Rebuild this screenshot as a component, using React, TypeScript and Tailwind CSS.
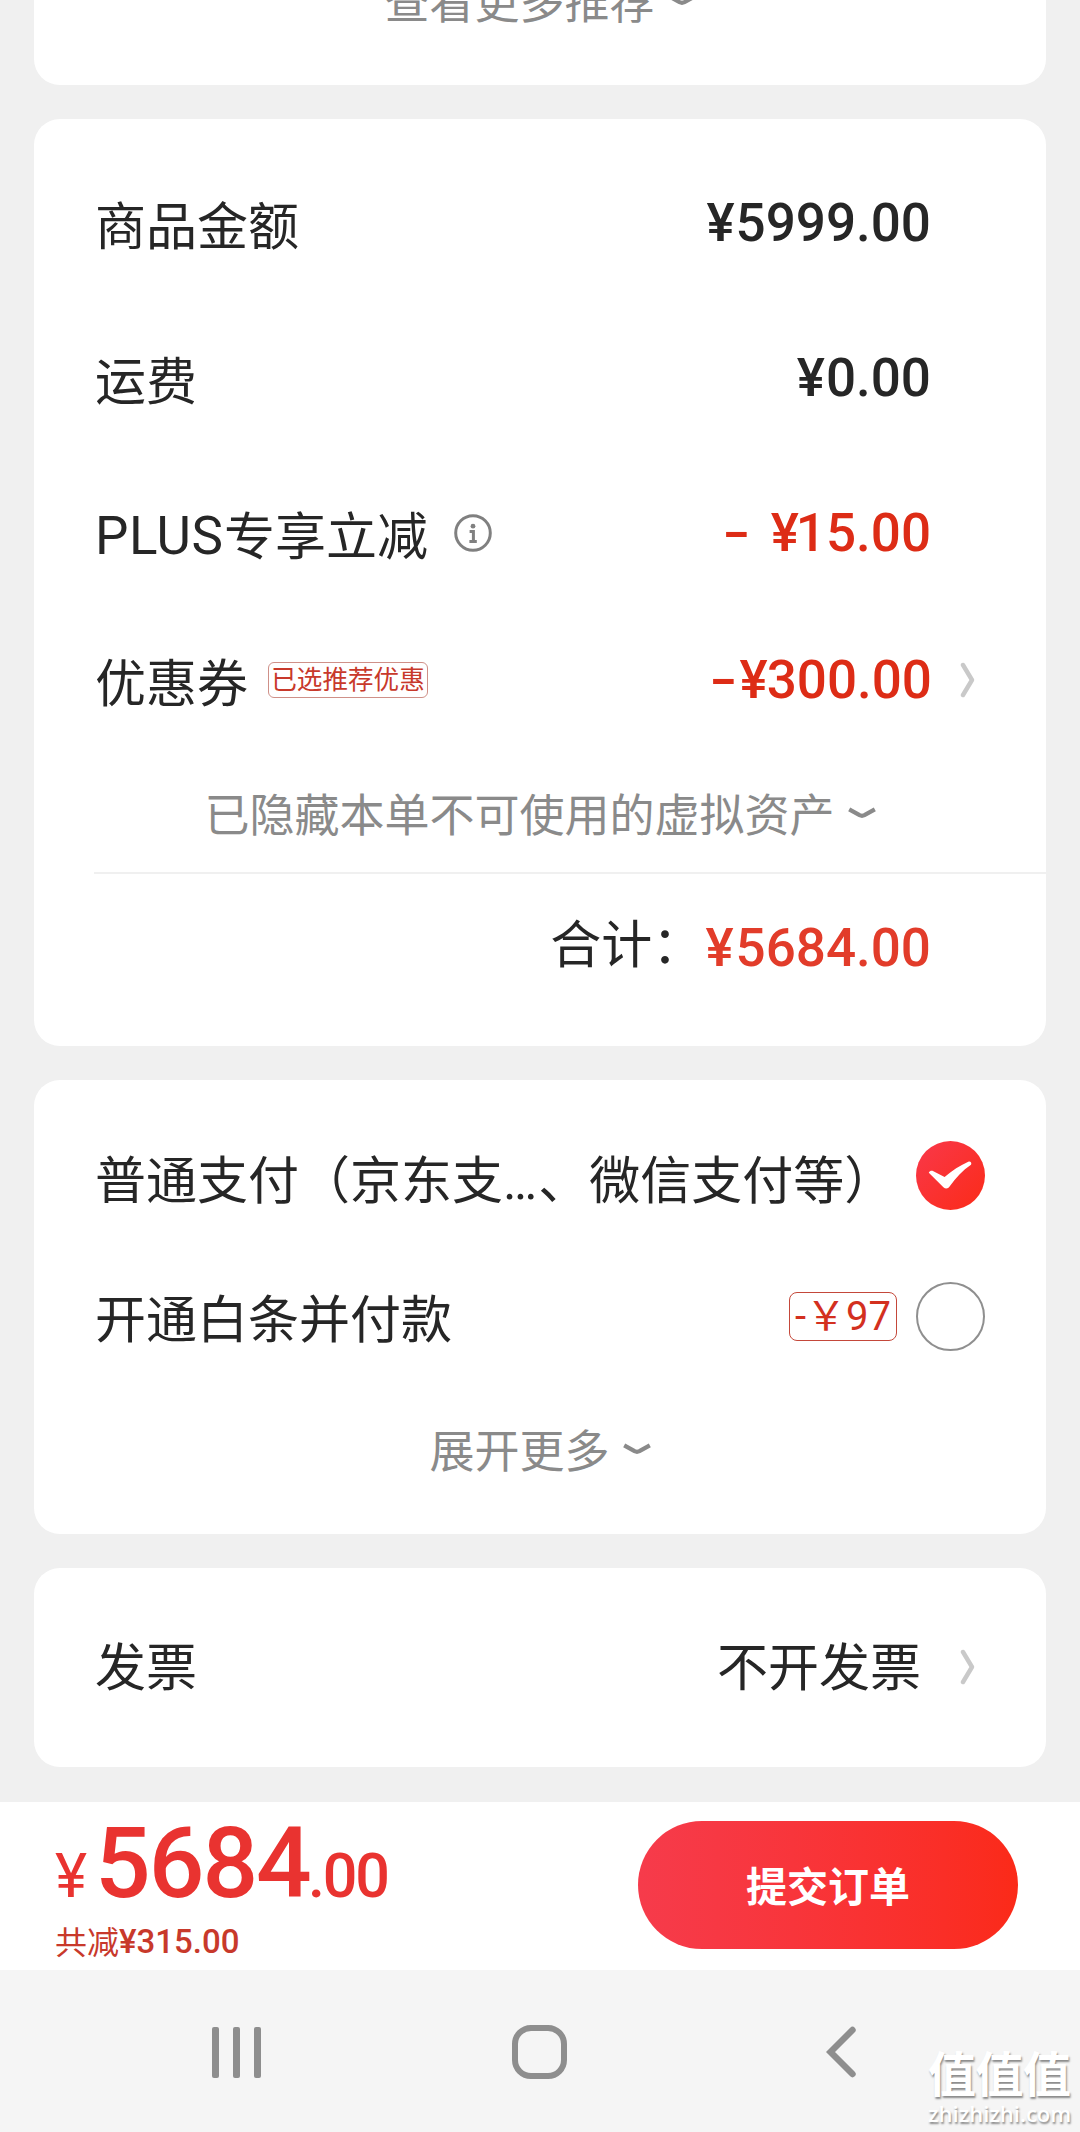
import type { ReactNode } from "react";

const CJK = "font-['Noto_Sans_CJK_SC','Noto_Sans',sans-serif]";
const NUM = "font-[Roboto,'Noto_Sans_CJK_SC',sans-serif]";

function ChevronDown() {
  return (
    <svg width="28" height="12" viewBox="0 0 28 12" fill="none">
      <path d="M1.2 2.4L11.6 8.2Q14 9.4 16.4 8.2L26.8 2.4" stroke="#8a8a8a" strokeWidth="4.2" />
    </svg>
  );
}

function ChevronRight() {
  return (
    <svg width="16" height="36" viewBox="0 0 16 36" fill="none">
      <path
        d="M3 3L12 18L3 33"
        stroke="#c9c9c9"
        strokeWidth="4.4"
        strokeLinecap="round"
        strokeLinejoin="round"
      />
    </svg>
  );
}

function InfoIcon() {
  return (
    <svg width="38" height="38" viewBox="0 0 38 38" fill="none">
      <circle cx="19" cy="19" r="17.3" stroke="#808080" strokeWidth="3" />
      <circle cx="19" cy="12.2" r="2.4" fill="#808080" />
      <path d="M15.6 17.4H19.4V27M15.4 27.4H22.8" stroke="#808080" strokeWidth="3" />
    </svg>
  );
}

function Row({
  label,
  value,
  sign,
  yen = "mr-[1px]",
  arrow = false,
  className = "h-[155px]",
}: {
  label: ReactNode;
  value: string;
  sign?: ReactNode;
  yen?: string;
  arrow?: boolean;
  className?: string;
}) {
  return (
    <div className={`flex items-center pl-[61px] ${className}`}>
      <div className="flex flex-1 items-center text-[51px] leading-[60px]">{label}</div>
      <div
        className={`${NUM} flex text-[53px] leading-[60px] font-medium ${
          sign ? "text-[#dd2c16]" : "text-[#262626]"
        }`}
      >
        {sign}
        <span className={yen}>¥</span>
        <span>{value}</span>
      </div>
      <div className={arrow ? "w-[114px] pl-[28px]" : "w-[115px]"}>{arrow && <ChevronRight />}</div>
    </div>
  );
}

function More({ text }: { text: string }) {
  return (
    <div className="flex items-center gap-[13px] text-[45px] leading-[54px] text-[#8a8a8a]">
      <span>{text}</span>
      <ChevronDown />
    </div>
  );
}

export default function App() {
  return (
    <div className={`${CJK} relative flex h-[2132px] w-[1080px] flex-col overflow-hidden bg-[#f0f0f0] text-[#262626]`}>
      <div className="flex flex-col gap-[34px] px-[34px]">
        <section className="flex h-[85px] justify-center rounded-b-[26px] bg-white">
          <div className="-mt-[27px]">
            <More text="查看更多推荐" />
          </div>
        </section>

        <section className="h-[927px] rounded-[26px] bg-white pt-[26px]">
          <Row label="商品金额" value="5999.00" />
          <Row label="运费" value="0.00" />
          <Row
            sign={<span className="mr-[21px] inline-block origin-right scale-x-150">-</span>}
            yen="-mr-[3px]"
            label={
              <>
                <span className={`${NUM} w-[129px] pt-[6px] text-[53px] tracking-[0.5px]`}>PLUS</span>
                <span>专享立减</span>
                <span className="ml-[26px]">
                  <InfoIcon />
                </span>
              </>
            }
            value="15.00"
          />
          <Row
            sign={<span className="mr-[2px] inline-block origin-right scale-x-150">-</span>}
            yen="-mr-[1px]"
            arrow
            className="h-[139px]"
            label={
              <>
                <span>优惠券</span>
                <span className="ml-[20px] flex h-[36px] w-[160px] items-center justify-center rounded-[6px] border border-[#cf9088] pb-[3px] text-[25.6px] leading-[30px] text-[#c8392b]">
                  已选推荐优惠
                </span>
              </>
            }
            value="300.00"
          />
          <div className="flex h-[123px] items-center justify-center pt-1">
            <More text="已隐藏本单不可使用的虚拟资产" />
          </div>
          <div className="ml-[60px] h-[2px] bg-[#f0f0f0]" />
          <div className="flex h-[172px] items-center justify-end pr-[115px] pb-[24px]">
            <span className="mr-[2px] pb-[14px] text-[51px] leading-[60px]">合计：</span>
            <div className={`${NUM} flex text-[53px] leading-[60px] font-medium text-[#e23c2a]`}>
              <span className="mr-[2px]">¥</span>
              <span>5684.00</span>
            </div>
          </div>
        </section>

        <section className="h-[454px] rounded-[26px] bg-white pt-[25px]">
          <div className="flex h-[140px] items-center justify-between pr-[61px] pl-[61px]">
            <div className="pt-[8px] text-[51px] leading-[60px] whitespace-nowrap">
              普通支付（京东支<span className="font-[Roboto] tracking-[1px]">…</span>、微信支付等）
            </div>
            <svg className="-ml-[60px]" width="69" height="69" viewBox="0 0 69 69">
              <defs>
                <linearGradient id="on" x1="0" y1="0" x2="1" y2="1">
                  <stop offset="0" stopColor="#f9384a" />
                  <stop offset="1" stopColor="#fb2b18" />
                </linearGradient>
              </defs>
              <circle cx="34.5" cy="34.5" r="34.5" fill="url(#on)" />
              <path
                d="M12.8 31.8C13.8 29.8 15.4 29.4 17.4 30.2L28.6 36C36 29.8 44 24.4 52.8 20.6C54.6 20.2 56 22.2 55 23.8C46.6 29.4 39.8 36.6 33.6 45.6C32.2 47.8 29.4 48.2 27.4 46.2Z"
                fill="#fff"
              />
            </svg>
          </div>
          <div className="flex h-[142px] items-center pr-[61px] pl-[61px]">
            <div className="flex-1 text-[51px] leading-[60px]">开通白条并付款</div>
            <div
              className={`${NUM} mr-[19px] flex h-[49px] w-[108px] items-center justify-center rounded-[8px] border-[1.5px] border-[#c4483a] pt-[1px] text-[40px] leading-[44px] whitespace-nowrap text-[#d3301f]`}
            >
              -￥97
            </div>
            <div className="h-[69px] w-[69px] rounded-full border-[2.5px] border-[#8f8f8f]" />
          </div>
          <div className="flex h-[122px] items-center justify-center pt-[2px]">
            <More text="展开更多" />
          </div>
        </section>

        <section className="flex h-[199px] items-center rounded-[26px] bg-white pb-[7px] pl-[61px] text-[51px] leading-[60px]">
          <div className="flex-1">发票</div>
          <div>不开发票</div>
          <div className="w-[125px] pt-[5px] pl-[39px]">
            <ChevronRight />
          </div>
        </section>
      </div>

      <footer className="mt-[35px] flex h-[168px] items-start justify-between bg-white pr-[62px] pl-[55px]">
        <div>
          <div className={`${NUM} flex h-[114px] items-baseline font-medium whitespace-nowrap text-[#e93330]`}>
            <span className="w-[40px] text-[61px] leading-[123px] font-normal">¥</span>
            <span className="w-[213px] text-[98px] leading-[123px] tracking-[-2px]">5684</span>
            <span className="text-[61px] leading-[123px] tracking-[-2.2px]">.00</span>
          </div>
          <div className="flex items-center text-[32px] leading-[42px] text-[#c8392b]">
            <span>共减</span>
            <span className={`${NUM} pt-[5px] text-[33px] font-medium`}>¥315.00</span>
          </div>
        </div>
        <button className="mt-[19px] h-[128px] w-[380px] rounded-full bg-linear-to-r from-[#f63b4b] to-[#fb2a18] text-[41px] font-bold text-white">
          提交订单
        </button>
      </footer>

      <nav className="flex h-[162px] items-center bg-[#f5f5f5] pt-[2px] pl-[212px]">
        <div className="flex gap-[14.5px]">
          <i className="h-[51px] w-[6.5px] rounded-[2px] bg-[#8e8e8e]" />
          <i className="h-[51px] w-[6.5px] rounded-[2px] bg-[#8e8e8e]" />
          <i className="h-[51px] w-[6.5px] rounded-[2px] bg-[#8e8e8e]" />
        </div>
        <div className="ml-[251px] h-[54px] w-[55px] rounded-[19px] border-[6.5px] border-[#8e8e8e]" />
        <svg className="ml-[259px]" width="30" height="52" viewBox="0 0 30 52" fill="none">
          <path d="M26.5 4L4.5 26L26.5 48" stroke="#8e8e8e" strokeWidth="6.4" strokeLinecap="round" />
        </svg>
      </nav>

      {/* site mark over the bottom right corner */}
      <div className="absolute right-[8px] bottom-[5px] w-[144px] text-white [text-shadow:1px_2px_2px_#8a8a8a]">
        <div className="mb-[3px] text-[48px] leading-[50px] font-bold tracking-[-0.5px] whitespace-nowrap">值值值</div>
        <div className="font-['Open_Sans',sans-serif] text-[22px] leading-[28px] font-semibold whitespace-nowrap">
          zhizhizhi.com
        </div>
      </div>
    </div>
  );
}
